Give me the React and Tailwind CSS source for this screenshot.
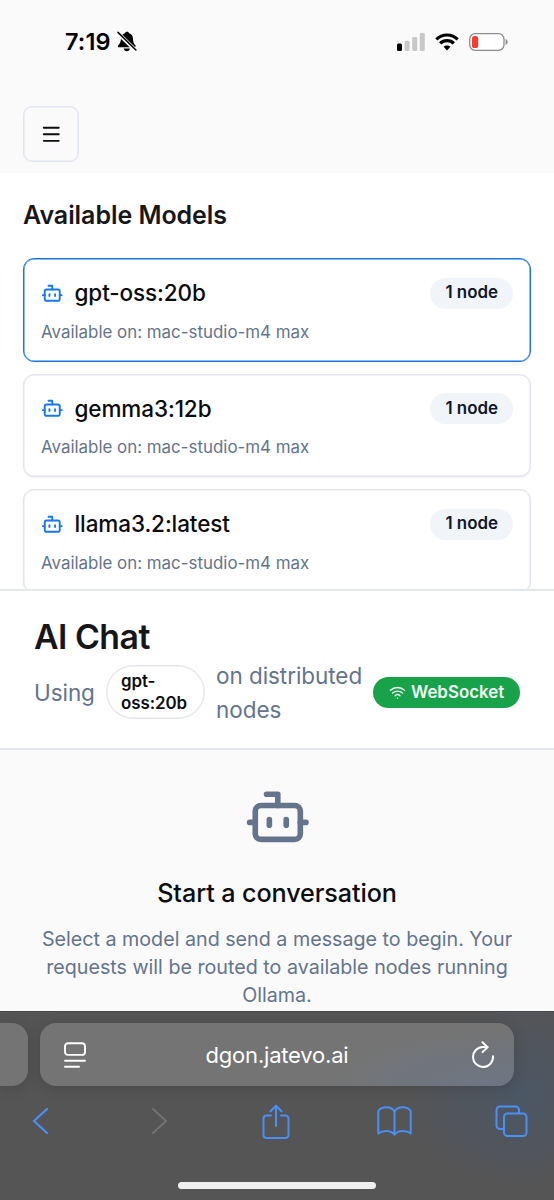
import React from 'react';
import { Bot, Menu, Wifi } from 'lucide-react';

const models = [
  { name: 'gpt-oss:20b', nodes: 1, host: 'mac-studio-m4 max' },
  { name: 'gemma3:12b', nodes: 1, host: 'mac-studio-m4 max' },
  { name: 'llama3.2:latest', nodes: 1, host: 'mac-studio-m4 max' },
];

const StatusBar = () => (
  <div className="flex h-[83px] items-center justify-between pl-[65px] pr-[46px] text-black">
    <div className="flex items-center gap-[6px]">
      <span className="text-[23.500px] leading-7 font-semibold tracking-[0.1px]">7:19</span>
      <svg width="20" height="21" viewBox="0 0 20 21" fill="currentColor">
        <path d="M10 .8c1.200 0 1.900.7 2.100 1.500 2.500.8 3.800 2.800 3.900 5.500.1 3.400.6 4.700 2.300 6.500.6.7.4 2-.8 2H2C.7 16.300.4 15 1.200 14.200 3 12.500 3.800 11 4 7.800c.1-2.700 1.400-4.700 3.900-5.500C8.100 1.500 8.800.8 10 .8Z" />
        <path d="M6.700 17.600h6.200c-.2 1.600-1.400 2.700-3.100 2.700s-2.900-1.100-3.100-2.700Z" />
        <path d="M0 1.200 19.500 20.200" stroke="#fafafa" strokeWidth="4" />
        <path d="M1 1.400 18.900 19" stroke="currentColor" strokeWidth="1.500" strokeLinecap="round" />
      </svg>
    </div>

    <div className="flex items-center">
      <svg width="28" height="18" viewBox="0 0 28 18">
        <rect x="0" y="10.500" width="5" height="7.500" rx="1.500" fill="#000" />
        <rect x="7.600" y="7.700" width="5" height="10.300" rx="1.300" fill="#c8c8c8" />
        <rect x="15.200" y="4" width="5" height="14" rx="1.300" fill="#c8c8c8" />
        <rect x="22.800" y="0" width="5" height="18" rx="1.300" fill="#c8c8c8" />
      </svg>
      <svg className="ml-2.5" width="24" height="18" viewBox="0 0 24 18" fill="none" stroke="#000" strokeWidth="3.200">
        <path d="M1.300 6.400a15.200 15.200 0 0 1 21.400 0" />
        <path d="M5.200 10.400a9.600 9.600 0 0 1 13.600 0" />
        <path d="M12 12.400c1.400 0 2.500.5 3.400 1.400L12 17.400l-3.400-3.600c.9-.9 2-1.400 3.400-1.400Z" fill="#000" stroke="none" />
      </svg>
      <svg className="ml-2.5" width="39" height="18" viewBox="0 0 39 18">
        <rect x=".7" y=".7" width="34.300" height="16.600" rx="5.500" fill="#fff" stroke="#8c8c8c" strokeWidth="1.300" />
        <rect x="3" y="3" width="6.200" height="12" rx="2.600" fill="#fb3a30" />
        <path d="M36.600 6c1.300.4 2 1.600 2 3s-.7 2.600-2 3Z" fill="#8c8c8c" />
      </svg>
    </div>
  </div>
);

const ModelCard = ({ model, selected }) => (
  <div
    className={`h-[103.500px] shrink-0 rounded-[11px] border bg-white px-[17px] pt-[17.500px] shadow-xs inset-ring-[0.500px] ${
      selected ? 'border-[#1c75dc] inset-ring-[#1c75dc]' : 'border-[#e2e5ef] inset-ring-[#e2e5ef]'
    }`}
  >
    <div className="flex h-[33px] items-center justify-between">
      <div className="flex items-center gap-[11px]">
        <Bot className="size-[22.500px] text-[#1677ee]" />
        <span className="text-[22.500px] font-medium leading-8 tracking-[-0.1px] text-[#0b0b0d]">{model.name}</span>
      </div>
      <span className="flex h-[31px] items-center rounded-full bg-[#f1f4f9] px-[15px] text-[16.900px] font-semibold text-[#0f172a]">
        {model.nodes} node
      </span>
    </div>
    <p className="mt-[11px] text-[16.900px] leading-[22.500px] text-[#64748b]">Available on: {model.host}</p>
  </div>
);

const Toolbar = () => (
  <div className="flex h-[189px] shrink-0 flex-col overflow-hidden border-t border-[#464646] bg-[#555556] bg-radial-[110px_90px_at_520px_82px] from-[#4b5765] to-[#555556]">
    {/* Address bar */}
    <div className="mt-[11px] flex h-[63px] gap-3">
      <div className="w-7 shrink-0 rounded-r-[16px] bg-[#747474] shadow-[0_2px_14px_rgba(0,0,0,0.16)]" />
      <div className="flex w-[474px] items-center justify-between rounded-[16px] bg-[#747474] bg-radial-[170px_55px_at_460px_63px] from-[#6c7684] to-[#747474] pl-6 pr-5 text-white shadow-[0_2px_14px_rgba(0,0,0,0.16)]">
        <svg width="22" height="26" viewBox="0 0 22 26" fill="none" stroke="#fff" strokeWidth="1.900" strokeLinecap="round">
          <rect x="1" y="1.300" width="20" height="11.600" rx="3" />
          <path d="M1 18.800h20M1 24.700h14" />
        </svg>
        <span className="mr-1 text-[22px] leading-8 tracking-[-0.200px]">dgon.jatevo.ai</span>
        <svg width="22" height="27" viewBox="0 0 22 27" fill="none" stroke="#fff" strokeWidth="2" strokeLinecap="round" strokeLinejoin="round">
          <path d="M21 15.200A10 10 0 1 1 11 6h4.500" />
          <path d="m10.500 1.300 5 4.900-5 4.900" />
        </svg>
      </div>
    </div>

    <div className="mt-[15px] flex h-10 items-center justify-between pl-8 pr-[26px] text-[#4a8ff7]">
      <svg width="16" height="28" viewBox="0 0 16 28" fill="none" stroke="currentColor" strokeWidth="2.200" strokeLinecap="round" strokeLinejoin="round">
        <path d="M15 2 2 14l13 12" />
      </svg>
      <svg className="ml-5 text-[#737375]" width="16" height="28" viewBox="0 0 16 28" fill="none" stroke="currentColor" strokeWidth="2" strokeLinecap="round" strokeLinejoin="round">
        <path d="m2 2 13 12L2 26" />
      </svg>
      <svg className="ml-3" width="28" height="35" viewBox="0 0 28 35" fill="none" stroke="currentColor" strokeWidth="2" strokeLinecap="round" strokeLinejoin="round">
        <path d="M9 11.500H4.500A3 3 0 0 0 1.500 14.500V31a3 3 0 0 0 3 3h19a3 3 0 0 0 3-3V14.500a3 3 0 0 0-3-3H19" />
        <path d="M14 22V2M8.500 7.300 14 1.800l5.500 5.500" />
      </svg>
      <svg className="ml-1" width="35" height="30" viewBox="0 0 35 30" fill="none" stroke="currentColor" strokeWidth="2" strokeLinecap="round" strokeLinejoin="round">
        <path d="M17.500 5.500C16 2.700 12.800 1.300 9.400 1.300S3 2.700 1.300 5v22.500c2-1.600 4.600-2.600 7.900-2.600 3.400 0 6.300 1.200 8.300 3.600 2-2.400 4.900-3.600 8.300-3.600 3.300 0 5.900 1 7.900 2.600V5c-1.700-2.300-4.700-3.700-8.100-3.700s-6.600 1.400-8.100 4.200Z" />
        <path d="M17.500 5.500v23" />
      </svg>
      <svg width="33" height="33" viewBox="0 0 33 33" fill="none" stroke="currentColor" strokeWidth="2" strokeLinejoin="round">
        <rect x="9" y="8.500" width="22.500" height="22.500" rx="3.500" />
        <path d="M9 24H5a3.500 3.500 0 0 1-3.500-3.500V5A3.500 3.500 0 0 1 5 1.500h15.500A3.500 3.500 0 0 1 24 5v3.500" />
      </svg>
    </div>

    <div className="mx-auto mt-[41px] h-[7px] w-[198px] rounded-full bg-[#efefef]" />
  </div>
);

const App = () => {
  return (
    <div className="flex h-[1200px] w-[554px] flex-col overflow-hidden bg-[#fafafa] font-['Inter',sans-serif] text-[#0c0d10]">
      <header className="h-[173px] shrink-0">
        <StatusBar />
        <button className="ml-[23px] mt-[23px] flex size-14 items-center justify-center rounded-[9px] border border-[#e1e5f0] bg-[#fafafa] inset-ring-[0.500px] inset-ring-[#e1e5f0]">
          <Menu className="size-[22.500px]" />
        </button>
      </header>

      {/* Models */}
      <section className="flex h-[416px] shrink-0 flex-col overflow-hidden bg-white px-[23px] pt-6">
        <h2 className="text-[25px] font-semibold leading-9 tracking-[-0.060px] text-[#171719]">Available Models</h2>
        <div className="mt-[25px] flex flex-col gap-3">
          {models.map((model, i) => (
            <ModelCard key={model.name} model={model} selected={i === 0} />
          ))}
        </div>
      </section>

      {/* Chat header */}
      <section className="h-[161px] shrink-0 border-y-2 border-[#e4e7f0] bg-white pl-[34px] pr-[34px] pt-[23px]">
        <h1 className="text-[33.800px] font-semibold leading-[45px] tracking-[-0.500px] text-[#171719]">AI Chat</h1>
        <div className="flex h-[66px] items-center text-[22.500px] leading-[34px] tracking-[-0.060px] text-[#64748b]">
          <span className="w-[72px] shrink-0 pt-px">Using</span>
          <span className="flex h-[54px] w-[99px] shrink-0 items-center rounded-full border border-[#e2e5ef] pl-3.5 text-[16.900px] font-semibold leading-[22.500px] text-[#0c0d10] inset-ring-[0.500px] inset-ring-[#e2e5ef]">
            gpt-<br />oss:20b
          </span>
          <span className="ml-[11px] w-[157px] shrink-0 pt-px">
            on distributed<br />nodes
          </span>
          <span className="flex h-[31px] w-[147px] shrink-0 items-center gap-[5px] rounded-full bg-[#18a34a] pl-4 text-[16.900px] font-semibold tracking-normal text-[#effdf4]">
            <Wifi className="size-[17px]" />
            WebSocket
          </span>
        </div>
      </section>

      {/* Empty conversation */}
      <section className="flex min-h-0 grow flex-col items-center overflow-hidden pt-[33px] text-center">
        <Bot className="ml-px size-[67.600px] shrink-0 text-[#64748b]" />
        <h3 className="mt-[22.400px] shrink-0 text-[25.200px] font-medium leading-10 tracking-[-0.120px]">Start a conversation</h3>
        <p className="mt-3 shrink-0 text-[19.700px] leading-7 text-[#64748b]">
          Select a model and send a message to begin. Your<br />
          requests will be routed to available nodes running<br />
          Ollama.
        </p>
      </section>

      <Toolbar />
    </div>
  );
};

export default App;
